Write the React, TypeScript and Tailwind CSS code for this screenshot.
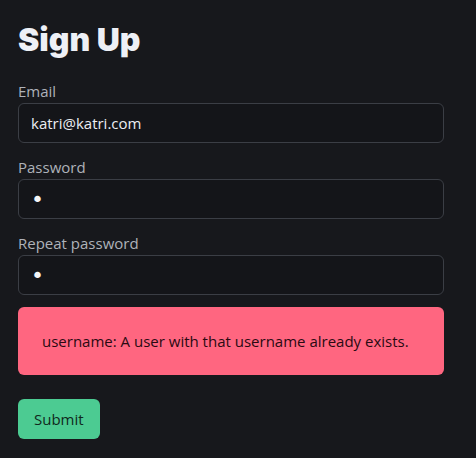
import { useState } from 'react'

export default function App() {
  const [email, setEmail] = useState('katri@katri.com')
  const [password, setPassword] = useState('a')
  const [repeat, setRepeat] = useState('a')

  return (
    <div className="min-h-[458px] bg-[#17181c] font-['Open_Sans',sans-serif] text-[#e6e8ec]">
      <form className="flex w-[444px] flex-col pl-[18px] pt-[20px]" onSubmit={(e) => e.preventDefault()}>
        {/* 제목 */}
        <h1 className="mb-[19px] font-['Inter',sans-serif] text-[32px] font-black leading-[40px] text-[#eef0f6]">
          Sign Up
        </h1>

        {/* 입력 필드 */}
        <div className="flex flex-col gap-3">
          <Field label="Email" type="email" value={email} onChange={setEmail} />
          <Field label="Password" type="password" value={password} onChange={setPassword} />
          <Field label="Repeat password" type="password" value={repeat} onChange={setRepeat} />

          {/* 에러 메시지 */}
          <div className="rounded-md bg-[#ff6680] px-6 py-[22px] text-[15px] leading-6 text-[#2a0a12]">
            username: A user with that username already exists.
          </div>
        </div>

        <div className="mt-6">
          <button
            type="submit"
            className="h-10 rounded-md bg-[#4ccb92] px-4 text-[15px] text-[#10291d]"
          >
            Submit
          </button>
        </div>
      </form>
    </div>
  )
}

function Field({
  label,
  type,
  value,
  onChange,
}: {
  label: string
  type: string
  value: string
  onChange: (v: string) => void
}) {
  const isPassword = type === 'password'
  return (
    <label className="flex flex-col">
      <span className="text-[15px] leading-6 text-[#aeb2b9]">{label}</span>
      <input
        type={type}
        value={value}
        onChange={(e) => onChange(e.target.value)}
        className={
          isPassword
            ? "h-10 rounded-md border border-[#3b3e45] bg-[#141519] px-3 font-['DejaVu_Sans',sans-serif] text-[22px] text-[#f4f5f7] outline-none"
            : 'h-10 rounded-md border border-[#3b3e45] bg-[#141519] px-3 text-[15px] text-[#eceef2] outline-none'
        }
      />
    </label>
  )
}
